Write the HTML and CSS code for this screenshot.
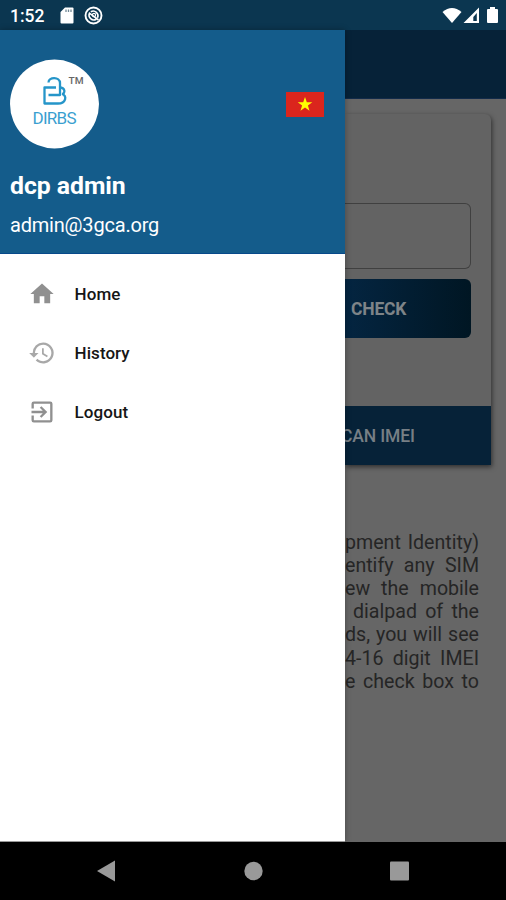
FILE: index.html
```html
<!DOCTYPE html>
<html lang="en">
<head>
<meta charset="utf-8">
<title>DIRBS</title>
<link rel="stylesheet" href="styles.css">
</head>
<body>
<div class="phone">
  <header class="status">
    <span class="time">1:52</span>
    <svg class="sd" width="14" height="17" viewBox="0 0 14 17"><path fill="#fff" d="M5 .5h7.500q1 0 1 1v14q0 1-1 1h-11q-1 0-1-1V5z"/><path stroke="#718895" stroke-width="1.300" d="M6 2.500v2.500M8.500 2.500v2.500M11 2.500v2.500"/></svg>
    <svg class="sync" width="19" height="19" viewBox="0 0 19 19" fill="none" stroke="#fff"><circle cx="9.500" cy="9.500" r="8" stroke-width="1.900"/><path stroke-width="1.600" d="M12.200 13.200A4.700 4.700 0 0 1 5.500 7.200L14.500 14M6.800 5.800A4.700 4.700 0 0 1 13.500 11.800"/><circle cx="10" cy="9" r="1.600" stroke-width="1.200"/></svg>
    <span class="spacer"></span>
    <svg width="58" height="20" viewBox="0 0 58 20" fill="#fff"><path d="M2.500 6Q12-2 21.500 6L12 17z"/><path fill-rule="evenodd" d="M39 1.500V17H23.500zM36.800 7v8h-3.500v-4z"/><path d="M48 3h2V1h5v2h2q1 0 1 1v12q0 1-1 1h-9q-1 0-1-1V4q0-1 1-1z"/></svg>
  </header>
  <div class="body">
    <aside class="drawer">
      <section class="profile">
        <div class="top">
          <svg class="avatar" width="90" height="90" viewBox="0 0 90 90"><circle cx="44.500" cy="45" r="44.500" fill="#fff"/><g fill="none" stroke="#2595c9" stroke-width="2.300" stroke-linejoin="round"><path d="M38.500 23.500C38.500 17.500 50 17.500 50 24v12H38.500"/><path d="M46 28.500H34.500V44.500H48c8 0 9.500-8 4-9.500"/><path d="M49.500 28.500c6 0 6 6 2.500 6.500"/></g><text class="tm" x="58.500" y="24.500" textLength="15" lengthAdjust="spacingAndGlyphs">TM</text><text class="brand" x="22.500" y="65" textLength="44" lengthAdjust="spacing">DIRBS</text></svg>
          <svg class="flag" width="38" height="25" viewBox="0 0 38 25"><path fill="#db251d" d="M0 0h38v25H0z"/><path fill="#ff0" d="M19 5l1.800 5.200h5.500l-4.400 3.300 1.600 5.200-4.500-3.200-4.500 3.200 1.600-5.200-4.400-3.300h5.500z"/></svg>
        </div>
        <h1>dcp admin</h1>
        <p class="email">admin@3gca.org</p>
      </section>
      <nav>
        <a class="item"><svg width="28" height="28" viewBox="0 0 24 24" fill="#909090"><path d="M10 20v-6h4v6h5v-8h3L12 3 2 12h3v8z"/></svg><span>Home</span></a>
        <a class="item"><svg width="28" height="28" viewBox="0 0 24 24" fill="#a8a8a8"><path d="M13 3a9 9 0 0 0-9 9H1l3.900 3.900.07.140L9 12H6a7 7 0 1 1 2.060 4.940l-1.420 1.420A9 9 0 1 0 13 3zm-1 5v5l4.280 2.540.72-1.210-3.500-2.080V8z"/></svg><span>History</span></a>
        <a class="item"><svg width="28" height="28" viewBox="0 0 24 24" fill="#909090"><path d="M10.090 15.590L11.500 17l5-5-5-5-1.410 1.410L12.670 11H3v2h9.670zM19 3H5a2 2 0 0 0-2 2v4h2V5h14v14H5v-4H3v4a2 2 0 0 0 2 2h14a2 2 0 0 0 2-2V5a2 2 0 0 0-2-2z"/></svg><span>Logout</span></a>
      </nav>
    </aside>
    <main>
      <div class="appbar"></div>
      <section class="card">
        <div class="form"><div class="input"></div><div class="check">CHECK</div></div>
        <div class="scan"><span>CAN IMEI</span></div>
      </section>
      <div class="info">
        <p>pment Identity)</p>
        <p>entify any SIM</p>
        <p>ew the mobile</p>
        <p class="indent">dialpad of the</p>
        <p>ds, you will see</p>
        <p>4-16 digit IMEI</p>
        <p>e check box to</p>
      </div>
    </main>
  </div>
  <footer>
    <svg width="506" height="58" viewBox="0 0 506 58" fill="#999"><path d="M97 29l18-10.500v21z"/><circle cx="253.500" cy="29" r="9.200"/><rect x="390" y="19.500" width="19" height="19" rx="1"/></svg>
  </footer>
</div>
</body>
</html>
```
FILE: styles.css
```css
* { box-sizing: border-box; }
body { margin: 0; font-family: Roboto, "Liberation Sans", sans-serif; }
h1, p { margin: 0; }
svg { display: block; flex: none; }
.phone { width: 506px; height: 900px; display: flex; flex-direction: column; overflow: hidden; background: #666; }
.status { height: 30px; flex: none; display: flex; align-items: center; padding: 1px 8px 0 10px; background: #0b3650; color: #fff; }
.time { width: 50px; font-size: 17.5px; font-weight: 500; line-height: 30px; }
.sync { margin-left: 10px; }
.spacer { flex: 1; }
.body { height: 812px; flex: none; display: flex; }
.drawer { width: 345px; flex: none; background: #fff; box-shadow: 0 0 6px rgba(0, 0, 0, .3); z-index: 1; border-bottom: 1px solid #999; }
.profile { height: 224px; padding: 29px 21px 0 10px; background: #145c8b; color: #fff; border-bottom: 1px solid #07498a; }
.top { display: flex; justify-content: space-between; align-items: center; }
.tm { font: 500 9px Roboto, sans-serif; fill: #666; }
.brand { font: 400 17px Roboto, sans-serif; fill: #3a9fd0; }
h1 { margin-top: 22px; font-size: 24.8px; letter-spacing: -.05px; line-height: 30px; font-weight: 700; }
.email { margin-top: 10px; font-size: 20px; line-height: 28px; letter-spacing: -.2px; }
nav { padding-top: 10px; }
.item { height: 59px; display: flex; align-items: center; padding-left: 28px; gap: 18.6px; font-size: 17px; font-weight: 500; letter-spacing: .05px; color: #161616; }
main { width: 161px; min-width: 0; overflow: hidden; background: #666; }
.appbar { height: 69px; background: #062238; border-bottom: 1px solid #122b49; }
.card { width: 146px; height: 351px; margin-top: 15px; display: flex; flex-direction: column; background: #636363; border-radius: 0 6px 0 0; box-shadow: 1px 2px 5px rgba(0, 0, 0, .55); }
.form { flex: 1; padding: 89px 20px 0 0; }
.input { height: 66px; border: 1px solid #404040; border-left: 0; border-radius: 0 6px 6px 0; }
.check { height: 59px; margin-top: 10px; padding-left: 6px; line-height: 60px; font-size: 17.5px; font-weight: 700; letter-spacing: -.2px; color: #7e8488; border-radius: 0 6px 6px 0; background: linear-gradient(90deg, #042541, #001623); }
.scan { height: 59px; background: #062238; color: #777f85; font-size: 17.5px; font-weight: 500; line-height: 61px; letter-spacing: -.15px; white-space: nowrap; }
.scan span { display: block; margin-left: -4px; }
.info { width: 134px; padding-top: 65.6px; font-size: 19.6px; line-height: 23.2px; color: #252525; }
.info p { text-align-last: justify; white-space: nowrap; }
.info .indent { padding-left: 8px; }
footer { flex: 1; background: #000; }
```
